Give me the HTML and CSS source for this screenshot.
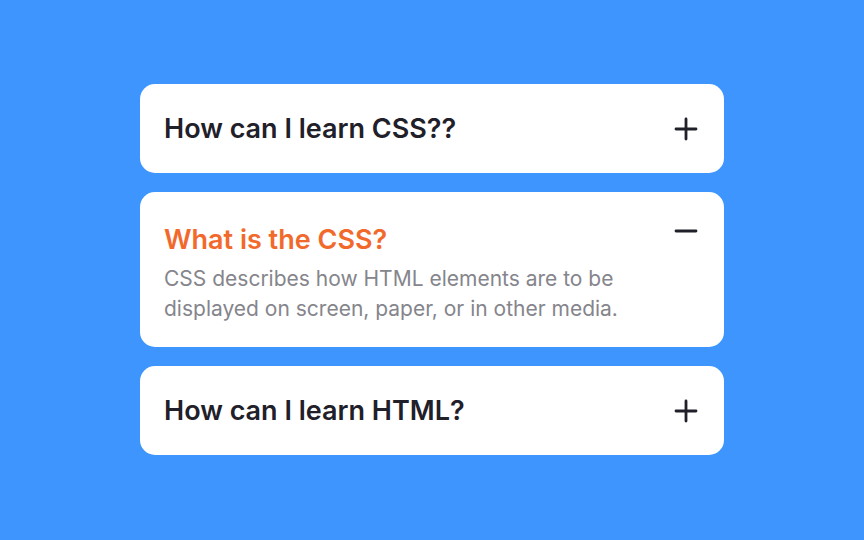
FILE: index.html
```html
<!DOCTYPE html>
<html lang="en">
<head>
  <meta charset="UTF-8" />
  <meta name="viewport" content="width=device-width, initial-scale=1.0"/>
  <title>FAQ Accordion</title>
  <link rel="stylesheet" href="styles.css">
</head>
<body>
  <main class="faq">
    <div class="faq-item">
      <div class="faq-head">
        <h2 class="faq-question">How can I learn CSS??</h2>
        <svg class="faq-icon" viewBox="0 0 24 24" aria-hidden="true">
          <path d="M12 2v20M2 12h20" />
        </svg>
      </div>
    </div>

    <div class="faq-item open">
      <div class="faq-head">
        <h2 class="faq-question">What is the CSS?</h2>
        <svg class="faq-icon" viewBox="0 0 24 24" aria-hidden="true">
          <path d="M2 12h20" />
        </svg>
      </div>
      <p class="faq-answer">CSS describes how HTML elements are to be displayed on screen, paper, or in other media.</p>
    </div>

    <div class="faq-item">
      <div class="faq-head">
        <h2 class="faq-question">How can I learn HTML?</h2>
        <svg class="faq-icon" viewBox="0 0 24 24" aria-hidden="true">
          <path d="M12 2v20M2 12h20" />
        </svg>
      </div>
    </div>
  </main>
</body>
</html>
```

FILE: styles.css
```css
body {
  margin: 0;
  padding: 0;
  font-family: Inter, "Noto Sans", sans-serif;
  background-color: #3e95fe; /* bright blue */
  min-height: 100vh;
  display: flex;
  justify-content: center;
}

.faq {
  width: 584px;
  margin-top: 84px;
  display: flex;
  flex-direction: column;
  gap: 19px;
}

.faq-item {
  background: #ffffff;
  border-radius: 15px;
  padding: 29px 26px 28px 24px;
}

.faq-item.open {
  padding-top: 32px;
  padding-bottom: 23px;
}

.faq-head {
  display: flex;
  justify-content: space-between;
  align-items: center;
}

.faq-item.open .faq-head {
  align-items: flex-start;
}

.faq-question {
  margin: 0;
  font-size: 27px;
  line-height: 32px;
  font-weight: 600;
  color: #1f2029;
}

.faq-item.open .faq-question {
  color: #f2692c; /* orange for the open question */
}

.faq-icon {
  width: 24px;
  height: 24px;
  fill: none;
  stroke: #1f2029;
  stroke-width: 2.8;
  stroke-linecap: round;
}

.faq-item.open .faq-icon {
  margin-top: -5px;
}

.faq-answer {
  margin: 8px 0 0;
  font-size: 21px;
  line-height: 30px;
  color: #85858c;
  max-width: 480px;
}
```
